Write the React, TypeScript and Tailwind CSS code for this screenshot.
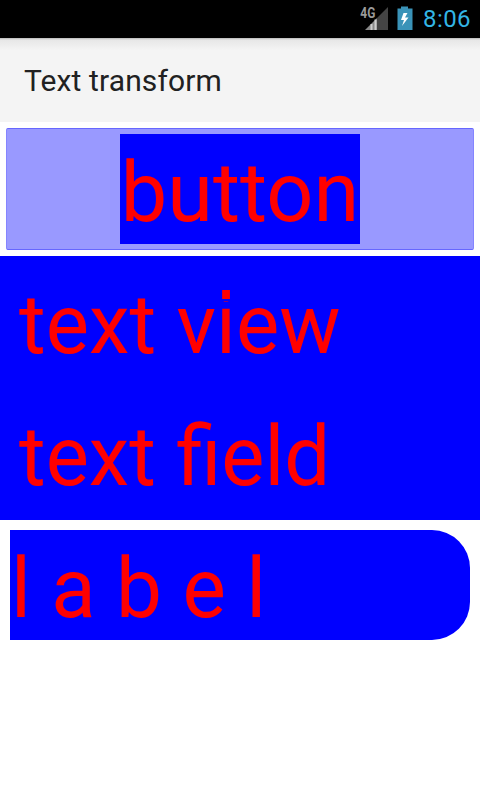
export default function App() {
  return (
    <div className="flex h-[800px] w-[480px] flex-col overflow-hidden bg-white font-[Roboto,sans-serif]">
      <div className="flex h-[38px] shrink-0 items-center justify-end bg-black pr-[9px] text-[24px] text-[#33b5e5]">
        <svg width="60" height="38" viewBox="0 0 60 38" className="mr-[3px]">
          <text x="0.3" y="17.5" fontSize="15" fontWeight="700" fill="#9a9a9a" textLength="15" lengthAdjust="spacingAndGlyphs">4G</text>
          <path d="M28 7V30H17V18Z" fill="#444" />
          <path d="M17 18V30H5Z" fill="#888" />
          <path d="M15.500 19.500V30M11.500 24V30" stroke="#ccc" strokeWidth="2" />
          <path d="M41 6.500h7v2h4.500V30H37.500V8.500H41z" fill="#3a93b8" />
          <path d="M43.500 13l-2.500 7h3l-2 6 6.500-8.500h-3.500l2.500-4.500z" fill="#fff" />
        </svg>
        <span className="tracking-[0.4px]">8:06</span>
      </div>
      <header className="flex h-[84px] shrink-0 items-center bg-[linear-gradient(#b8b8b8_0px,#e7e7e7_2px,#f4f4f4_12px)] pl-[24px] text-[30px] tracking-[0.12px] text-[#212121]">Text transform</header>
      <div className="p-[6px]">
        <div className="flex h-[122px] items-center justify-center rounded-[2px] border border-x-[#8585ff] border-y-[#6666ff] bg-[#9999ff]">
          <div className="h-[110px] w-[240px] bg-[#0000ff] text-center text-[84px] leading-[118px] text-[#ff0000]">
            <span className="relative -left-px inline-block scale-x-[0.985]">button</span>
          </div>
        </div>
      </div>
      <div className="h-[132px] bg-[#0000ff] pl-[19px] text-[84px] leading-[138px] text-[#ff0000]">
        <span className="inline-block origin-left scale-x-[0.972] whitespace-nowrap">
          text v
          <span className="relative">
            i
            <span className="absolute left-[3px] top-[12px] flex h-[14px] w-[14px] items-center justify-center bg-[#0000ff]">
              <span className="h-[9px] w-[8px] bg-[#ff0000]" />
            </span>
          </span>
          ew
        </span>
      </div>
      <div className="h-[132px] bg-[#0000ff] pl-[19px] text-[84px] leading-[138px] text-[#ff0000]">
        <span className="inline-block origin-left scale-x-[0.97]">text field</span>
      </div>
      <div className="mx-[10px] mt-[10px] h-[110px] rounded-r-[38px] bg-[#0000ff] pl-px text-[84px] leading-[118px] text-[#ff0000]">
        <span className="inline-block origin-left scale-x-[0.975]">l a b e l</span>
      </div>
    </div>
  );
}
